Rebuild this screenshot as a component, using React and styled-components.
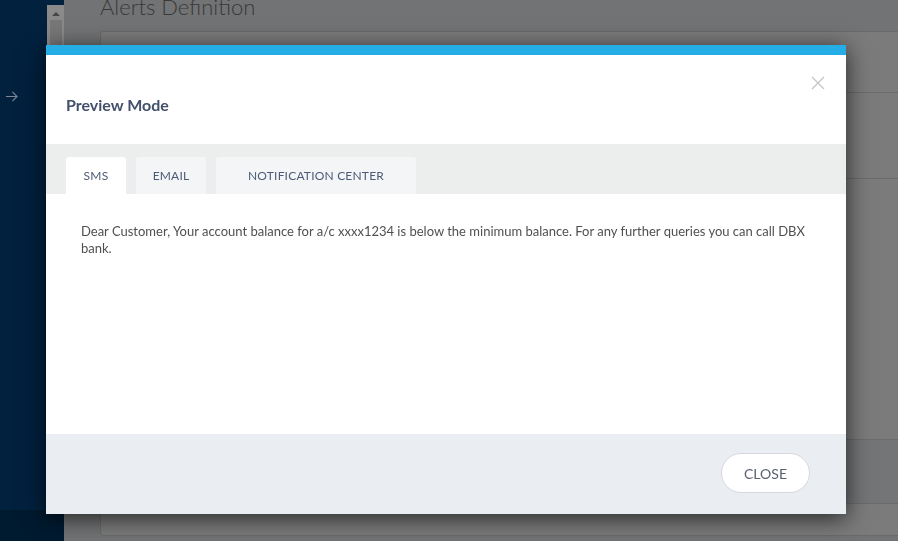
import React from "react";
import styled, { createGlobalStyle } from "styled-components";

const GlobalStyle = createGlobalStyle`
	html, body {
		margin: 0;
		padding: 0;
		height: 100%;
	}
	body {
		font-family: Lato, "Open Sans", "Liberation Sans", sans-serif;
		overflow: hidden;
	}
	* {
		box-sizing: border-box;
	}
`;

const tabs = [
	{ label: "SMS", width: 60 },
	{ label: "EMAIL", width: 70 },
	{ label: "NOTIFICATION CENTER", width: 200 },
];

const App = () => {
	return (
		<>
			<GlobalStyle />
			<Page>
				<Sidebar>
					<SidebarTop>
						<NavColumn>
							<ArrowIcon viewBox="0 0 14 14">
								<path d="M1 7h12M8 2l5 5-5 5" />
							</ArrowIcon>
						</NavColumn>
						<ScrollTrack>
							<ScrollArrow />
							<ScrollThumb />
						</ScrollTrack>
					</SidebarTop>
					<SidebarFooter />
				</Sidebar>
				<Main>
					<PageTitle>Alerts Definition</PageTitle>
					<Card>
						<CardRow $height={61} />
						<CardRow $height={86} />
						<CardRow $height={261} />
						<CardRow $height={64} $shade />
						<CardRow $height={31} $last />
					</Card>
				</Main>
			</Page>

			<Backdrop>
				<Modal>
					<Header>
						<Title>Preview Mode</Title>
						<CloseX aria-label="close">
							<svg width="14" height="14" viewBox="0 0 14 14">
								<path d="M1 1l12 12M13 1L1 13" />
							</svg>
						</CloseX>
					</Header>
					<TabBar>
						{tabs.map((t, i) => (
							<Tab key={t.label} $width={t.width} $active={i === 0}>
								{t.label}
							</Tab>
						))}
					</TabBar>
					<Body>
						<Message>
							Dear Customer, Your account balance for a/c xxxx1234 is below the minimum balance. For any further
							queries you can call DBX bank.
						</Message>
					</Body>
					<Footer>
						<CloseButton>CLOSE</CloseButton>
					</Footer>
				</Modal>
			</Backdrop>
		</>
	);
};

export default App;

const Page = styled.div`
	display: flex;
	width: 100vw;
	height: 100vh;
	background-color: #727374;
`;

const Sidebar = styled.div`
	width: 64px;
	display: flex;
	flex-direction: column;
	background-color: #01213f;
`;

const SidebarTop = styled.div`
	flex: 1;
	display: flex;
`;

const NavColumn = styled.div`
	flex: 1;
	padding-top: 87px;
	padding-left: 5px;
`;

const ArrowIcon = styled.svg`
	width: 13px;
	height: 13px;
	fill: none;
	stroke: #7d8796;
	stroke-width: 1.2;
`;

const ScrollTrack = styled.div`
	width: 17px;
	height: 120px;
	margin-top: 5px;
	background-color: #8a8a8a;
	display: flex;
	flex-direction: column;
	align-items: center;
	padding-top: 7px;
	gap: 4px;
`;

const ScrollArrow = styled.div`
	width: 0;
	height: 0;
	border-left: 4px solid transparent;
	border-right: 4px solid transparent;
	border-bottom: 4px solid #454545;
`;

const ScrollThumb = styled.div`
	width: 12px;
	height: 90px;
	background-color: #777777;
`;

const SidebarFooter = styled.div`
	height: 31px;
	background-color: #001a30;
`;

const Main = styled.div`
	flex: 1;
	padding-left: 36px;
	overflow: hidden;
`;

const PageTitle = styled.h1`
	margin: -4px 0 0;
	font-size: 22px;
	line-height: 22px;
	font-weight: 300;
	color: #383838;
	white-space: nowrap;
`;

const Card = styled.div`
	margin-top: 13px;
	margin-right: -10px;
	border: 1px solid #686a6c;
	border-radius: 3px;
	background-color: #7b7b7b;
`;

const CardRow = styled.div`
	height: ${(props) => props.$height}px;
	border-bottom: ${(props) => (props.$last ? "none" : "1px solid #6a6b6c")};
	background-color: ${(props) => (props.$shade ? "#747576" : "transparent")};
`;

const Backdrop = styled.div`
	position: fixed;
	inset: 0;
	padding: 45px 0 0 46px;
`;

const Modal = styled.div`
	width: 800px;
	display: flex;
	flex-direction: column;
	background-color: #ffffff;
	border-top: 10px solid #25ade6;
	box-shadow: 0 4px 22px rgba(0, 0, 0, 0.7);
`;

const Header = styled.div`
	position: relative;
	height: 89px;
	padding: 40px 20px 0;
`;

const Title = styled.h2`
	margin: 0;
	font-size: 16px;
	line-height: 20px;
	font-weight: 700;
	color: #43506b;
`;

const CloseX = styled.button`
	position: absolute;
	top: 21px;
	right: 21px;
	padding: 0;
	border: none;
	background: none;
	display: flex;
	cursor: pointer;
	svg {
		stroke: #c6c6c6;
		stroke-width: 1.4;
	}
`;

const TabBar = styled.div`
	height: 50px;
	display: flex;
	align-items: flex-end;
	gap: 10px;
	padding: 0 20px;
	background-color: #eceeee;
`;

const Tab = styled.div`
	width: ${(props) => props.$width}px;
	height: 37px;
	display: flex;
	align-items: center;
	justify-content: center;
	border-radius: 3px 3px 0 0;
	background-color: ${(props) => (props.$active ? "#ffffff" : "#f4f5f7")};
	font-size: 12px;
	letter-spacing: 0.2px;
	color: #4d5b78;
	cursor: pointer;
`;

const Body = styled.div`
	height: 240px;
	padding: 29px 35px 0;
`;

const Message = styled.p`
	margin: 0;
	font-size: 13px;
	line-height: 17px;
	color: #505050;
`;

const Footer = styled.div`
	height: 80px;
	display: flex;
	align-items: center;
	justify-content: flex-end;
	padding-right: 36px;
	padding-bottom: 2px;
	background-color: #eaedf2;
`;

const CloseButton = styled.button`
	width: 89px;
	height: 40px;
	border-radius: 20px;
	border: 1px solid #d5d8de;
	background-color: #ffffff;
	font-family: Lato, "Liberation Sans", sans-serif;
	font-size: 14px;
	color: #5b6170;
	cursor: pointer;
`;
